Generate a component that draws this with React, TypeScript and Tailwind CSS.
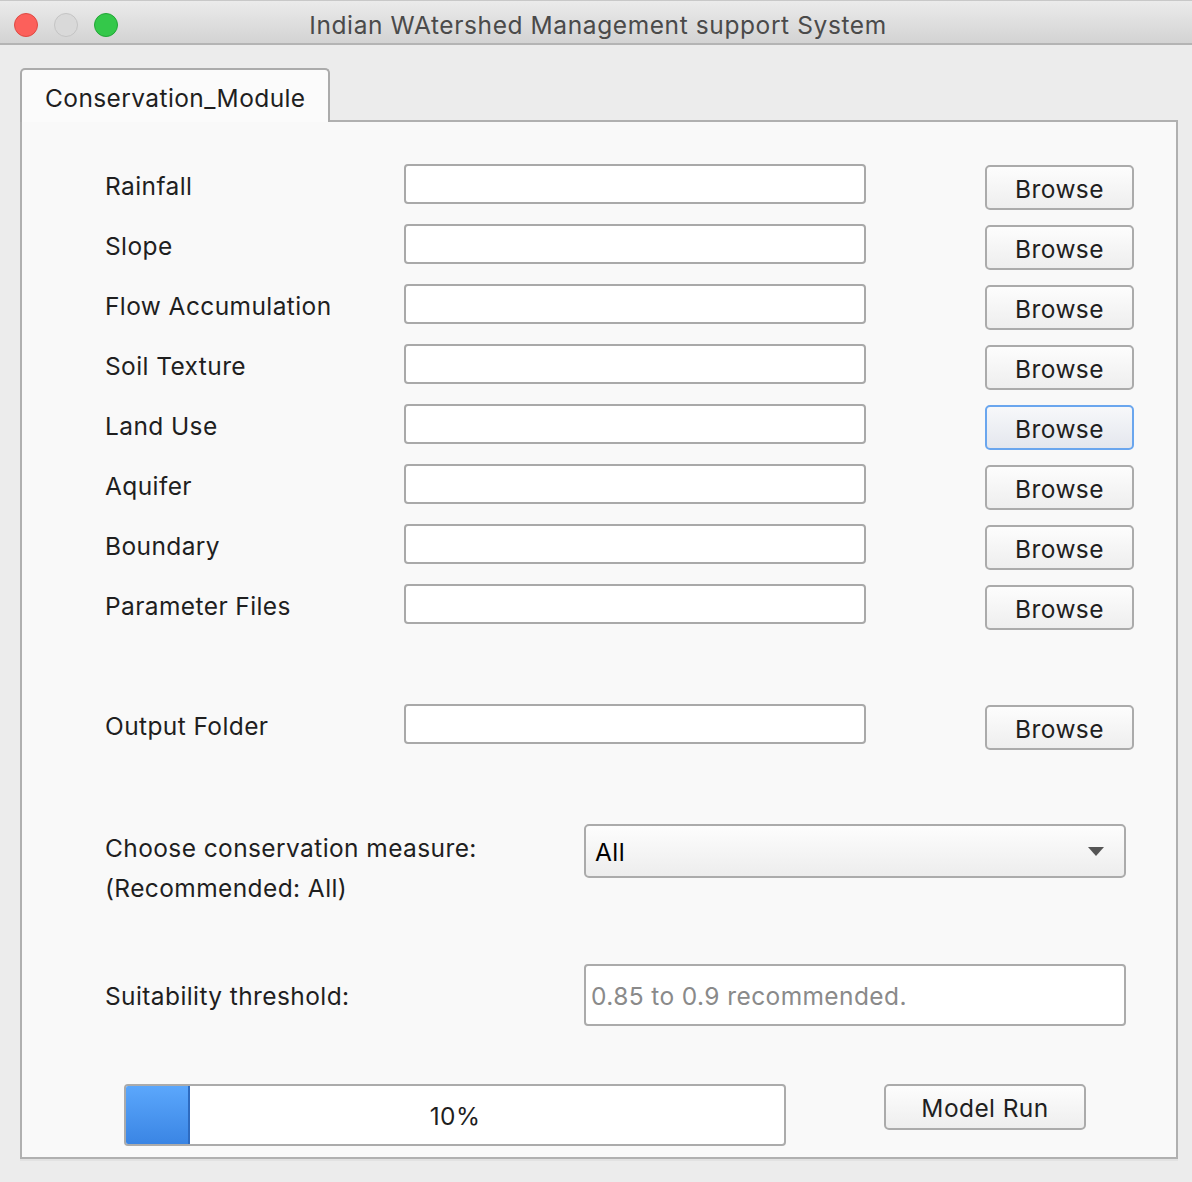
import React from "react";

const font = { fontFamily: "Inter, 'Liberation Sans', sans-serif" };

function Row({ label, focused }: { label: string; focused?: boolean }) {
  return (
    <div className="flex items-start h-[60px]">
      <div className="w-[299px] h-[40px] flex items-center pt-[4px] text-[24.5px] tracking-[0.4px] text-[#1f1f1f]">{label}</div>
      <div className="w-[462px] h-[40px] bg-white border-2 border-[#a9a9a9] rounded-[4px]" />
      <div className="w-[119px]" />
      <button
        className={
          focused
            ? "w-[149px] h-[45px] mt-px pt-[3px] rounded-[5px] border-2 border-[#6aa6ee] bg-gradient-to-b from-[#f7f8fa] to-[#e4e7ee] text-[24.5px] tracking-[0.4px] text-[#1f1f1f] flex items-center justify-center"
            : "w-[149px] h-[45px] mt-px pt-[3px] rounded-[5px] border-2 border-[#ababab] bg-gradient-to-b from-[#fdfdfd] to-[#eeeeee] text-[24.5px] tracking-[0.4px] text-[#1f1f1f] flex items-center justify-center"
        }
      >
        Browse
      </button>
    </div>
  );
}

export default function App() {
  return (
    <div className="w-[1192px] h-[1182px] bg-[#ececec] flex flex-col overflow-hidden" style={font}>
      <div className="h-[45px] pt-[5px] flex items-center relative bg-gradient-to-b from-[#ebebeb] to-[#d3d3d3] border-t border-[#c8c8c8] border-b-2 border-b-[#b4b4b4] shrink-0">
        <div className="flex items-center gap-[16px] pl-[14px]">
          <div className="w-[24px] h-[24px] rounded-full bg-[#fc605b] border border-[#de4a43]" />
          <div className="w-[24px] h-[24px] rounded-full bg-[#d9d9d9] border border-[#c4c4c4]" />
          <div className="w-[24px] h-[24px] rounded-full bg-[#34c84a] border border-[#22a636]" />
        </div>
        <div className="absolute inset-0 pt-[7px] flex items-center justify-center text-[24.5px] tracking-[0.6px] text-[#4a4a4a] pointer-events-none pl-[4px]">
          Indian WAtershed Management support System
        </div>
      </div>

      <div className="pl-[20px] pt-[23px] w-[1178px]">
        <div className="flex">
          <div className="relative z-10 w-[310px] h-[54px] bg-[#fbfbfb] border-2 border-b-0 border-[#ababab] rounded-t-[5px] flex items-center pl-[23px] pt-[5px] text-[24.5px] tracking-[0.4px] text-[#1f1f1f] -mb-[2px]">
            Conservation_Module
          </div>
        </div>
        <div className="h-[1039px] bg-[#f9f9f9] border-2 border-[#b0b0b0] pl-[83px] pt-[42px]">
          <Row label="Rainfall" />
          <Row label="Slope" />
          <Row label="Flow Accumulation" />
          <Row label="Soil Texture" />
          <Row label="Land Use" focused />
          <Row label="Aquifer" />
          <Row label="Boundary" />
          <Row label="Parameter Files" />
          <div className="h-[60px]" />
          <Row label="Output Folder" />
          <div className="h-[60px]" />

          <div className="flex items-start h-[140px]">
            <div className="w-[479px] pt-[4px] text-[24.5px] tracking-[0.4px] text-[#1f1f1f] leading-[40px]">
              <div>Choose conservation measure:</div>
              <div>(Recommended: All)</div>
            </div>
            <div className="w-[542px] h-[54px] pt-[3px] rounded-[5px] border-2 border-[#ababab] bg-gradient-to-b from-[#fdfdfd] to-[#ededed] flex items-center justify-between pl-[9px] pr-[20px] text-[24.5px] tracking-[0.4px] text-black">
              <span>All</span>
              <svg width="16" height="9" viewBox="0 0 16 9" className="-mt-[3px]">
                <path d="M0 0 L16 0 L8 9 Z" fill="#555" />
              </svg>
            </div>
          </div>

          <div className="flex items-start h-[120px]">
            <div className="w-[479px] h-[62px] pt-[3px] flex items-center text-[24.5px] tracking-[0.4px] text-[#1f1f1f]">Suitability threshold:</div>
            <div className="w-[542px] h-[62px] pt-[3px] rounded-[4px] border-2 border-[#ababab] bg-white flex items-center pl-[5px] text-[24.5px] tracking-[0.4px] text-[#8a8a8a]">
              0.85 to 0.9 recommended.
            </div>
          </div>

          <div className="flex items-start">
            <div className="ml-[19px] w-[662px] h-[62px] pt-[3px] rounded-[4px] border-2 border-[#ababab] bg-white relative flex items-center justify-center text-[24.5px] tracking-[0.4px] text-[#1f1f1f] overflow-hidden">
              <div className="absolute left-0 top-0 bottom-0 w-[64px] bg-gradient-to-b from-[#5ba7fc] to-[#3a85e4] border-r-2 border-[#2e6bc0]" />
              <span className="relative">10%</span>
            </div>
            <div className="w-[98px]" />
            <button className="w-[202px] h-[46px] pt-[3px] rounded-[5px] border-2 border-[#ababab] bg-gradient-to-b from-[#fdfdfd] to-[#eeeeee] text-[24.5px] tracking-[0.4px] text-[#1f1f1f] flex items-center justify-center">
              Model Run
            </button>
          </div>
        </div>
        <div className="h-[2px] bg-[#e2e2e2]" />
      </div>
    </div>
  );
}
